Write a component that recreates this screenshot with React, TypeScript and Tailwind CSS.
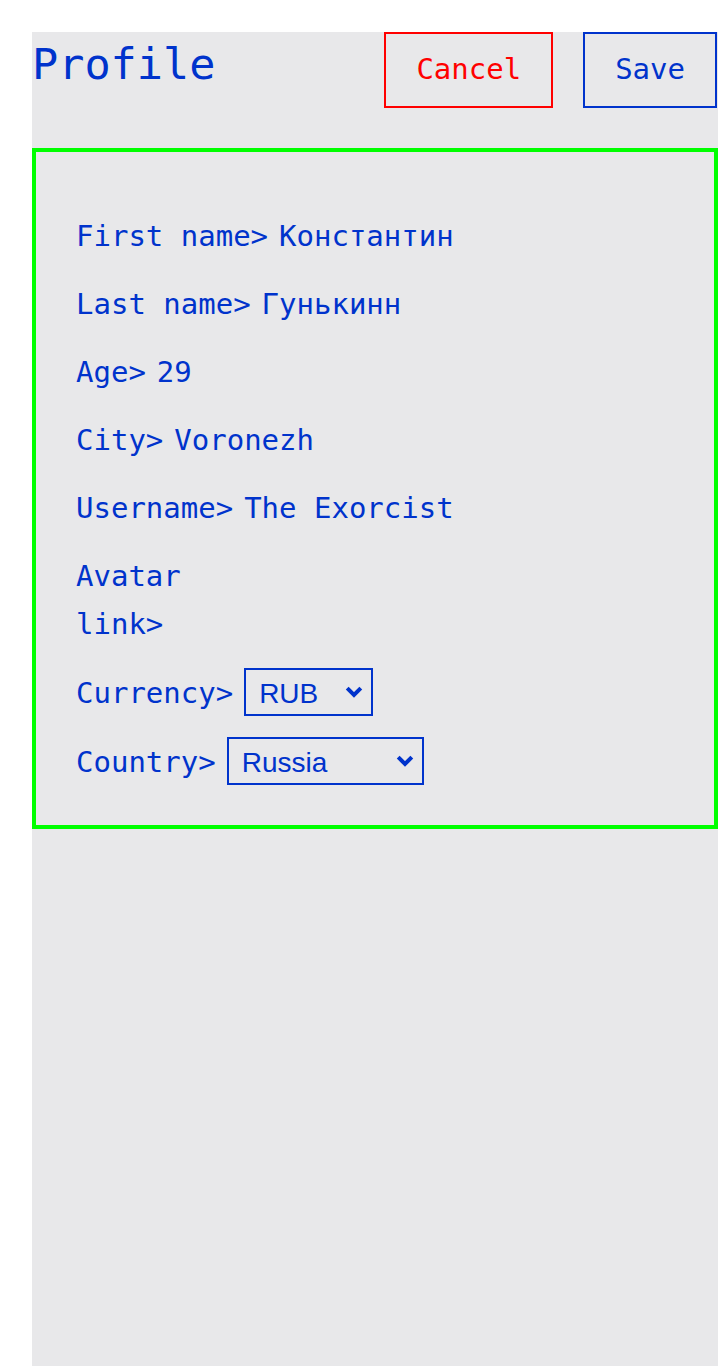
import React from "react";

const mono = "font-['DejaVu_Sans_Mono',monospace]";

function Row({ label, children }: { label: React.ReactNode; children?: React.ReactNode }) {
  return (
    <div className="flex items-center gap-[11px]">
      <span>{label}</span>
      {children}
    </div>
  );
}

function Select({ value, width }: { value: string; width: string }) {
  return (
    <div className={`relative ${width}`}>
      <select
        defaultValue={value}
        className="w-full h-[48px] appearance-none border-2 border-[#0033cc] bg-transparent pl-[13px] text-[28px] text-[#0033cc] font-['Liberation_Sans',Arial,sans-serif] outline-none"
      >
        <option>{value}</option>
      </select>
      <svg
        className="pointer-events-none absolute right-[10px] top-[18px]"
        width="18"
        height="12"
        viewBox="0 0 18 12"
      >
        <path d="M2.2 2.2 L9 9 L15.8 2.2" fill="none" stroke="#0033cc" strokeWidth="4" />
      </svg>
    </div>
  );
}

export default function App() {
  return (
    <div className={`bg-white pl-8 pt-8 min-h-[1366px] flex ${mono}`}>
      <div className="flex-1 bg-[#e8e8ea] text-[#0033cc]">
        <div className="flex justify-between items-start pr-[1px]">
          <h1 className="text-[43.5px] leading-[1] pt-[11px]">Profile</h1>
          <div className="flex gap-[30px]">
            <button className="h-[76px] px-[30px] border-2 border-[#ff0000] text-[#ff0000] text-[29px]">
              Cancel
            </button>
            <button className="h-[76px] px-[30px] border-2 border-[#0033cc] text-[29px]">
              Save
            </button>
          </div>
        </div>

        <div className="mt-[40px] border-4 border-[#00ff00] pl-[40px] pt-[60px] pb-[39px] text-[29px] leading-[48px] flex flex-col gap-[20px]">
          <Row label="First name>">
            <span>Константин</span>
          </Row>
          <Row label="Last name>">
            <span>Гунькинн</span>
          </Row>
          <Row label="Age>">
            <span>29</span>
          </Row>
          <Row label="City>">
            <span>Voronezh</span>
          </Row>
          <Row label="Username>">
            <span>The Exorcist</span>
          </Row>
          <Row
            label={
              <>
                Avatar
                <br />
                link&gt;
              </>
            }
          />
          <Row label="Currency>">
            <Select value="RUB" width="w-[129px]" />
          </Row>
          <Row label="Country>">
            <Select value="Russia" width="w-[197px]" />
          </Row>
        </div>
      </div>
    </div>
  );
}
